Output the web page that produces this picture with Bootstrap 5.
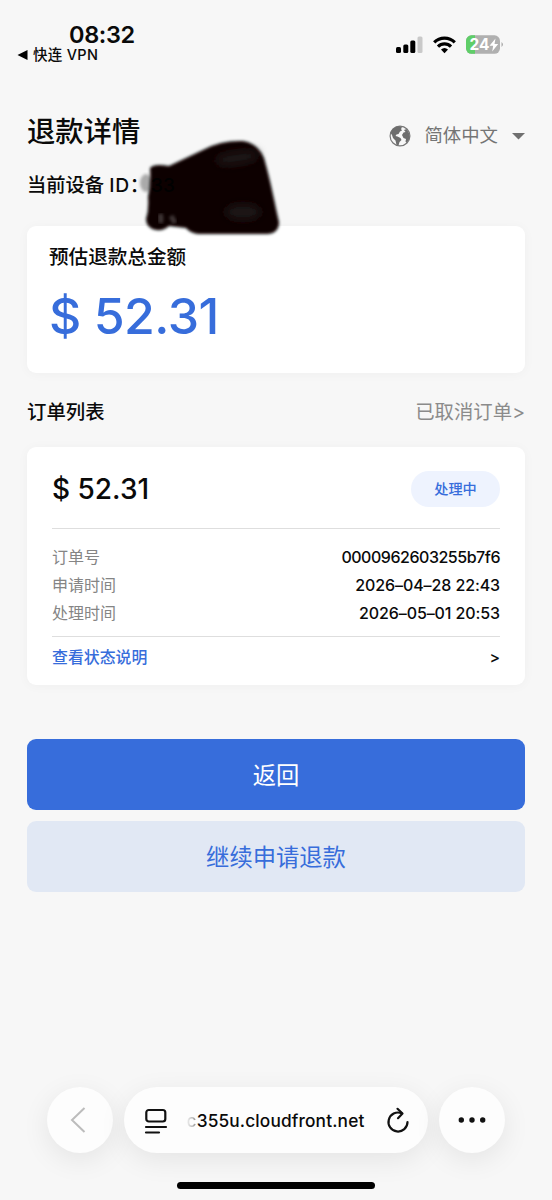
<!DOCTYPE html>
<html lang="zh-CN">
<head>
<meta charset="utf-8">
<meta name="viewport" content="width=device-width, initial-scale=1">
<title>退款详情</title>
<link href="https://cdn.jsdelivr.net/npm/bootstrap@5.3.0/dist/css/bootstrap.min.css" rel="stylesheet">
<style>
  :root { --brand: #376ddb; }
  body { font-family: Inter, "Noto Sans CJK SC", sans-serif; background: #f7f7f7; color: #0a0a0a; height: 1200px; overflow: hidden; }
  svg { display: block; flex: none; }
  .status-bar { height: 104px; padding: 21px 49px 0 17px; }
  .clock { font-size: 23.5px; line-height: 27px; font-weight: 600; padding-left: 52px; letter-spacing: -.35px; }
  .back-app { font-size: 14.5px; line-height: 14px; font-weight: 500; gap: 4px; letter-spacing: .3px; }
  .status-icons { padding-top: 14px; }
  .page-body { padding: 0 27px; }
  .page-title { font-size: 28.3px; line-height: 56px; height: 54px; font-weight: 500; margin: 0; }
  .lang { font-size: 18.4px; color: #757575; height: 54px; padding-top: 10px; }
  .lang span { margin: 0 14px 0 13px; }
  .device { font-size: 19.3px; line-height: 55px; height: 68px; font-weight: 500; position: relative; }
  .device .latin { letter-spacing: .7px; }
  .scribble { position: absolute; left: 106px; top: -23px; }
  .panel { background: #fff; border-radius: 9px; box-shadow: 0 1px 12px rgba(0,0,0,.035); }
  .summary { height: 147px; padding: 14px 22px; }
  .summary-label { font-size: 19.6px; line-height: 35px; height: 34px; font-weight: 500; }
  .total { font-size: 50px; line-height: 60px; font-weight: 500; color: var(--brand); padding-top: 12px; letter-spacing: -.5px; }
  .list-head { height: 74px; font-size: 19.4px; padding-top: 5px; }
  .list-head b { font-weight: 500; }
  .list-head span { color: #8b8b8b; }
  .order { height: 238px; padding: 0 25px; }
  .order-top { height: 82px; padding-top: 2px; border-bottom: 1px solid #dedede; }
  .order-amount { font-size: 28px; font-weight: 500; }
  .state { width: 89px; height: 36px; line-height: 35px; font-size: 14.2px; font-weight: 500; background: #eef3fe; color: var(--brand); }
  .order-rows { height: 108px; padding-top: 15px; border-bottom: 1px solid #dedede; }
  .order-rows > div { font-size: 16px; line-height: 27.8px; }
  .order-rows .key { color: #858585; }
  .order-rows .val { font-weight: 500; letter-spacing: -.1px; }
  .order-rows .serial { letter-spacing: -.47px; }
  .order-more { height: 42px; font-size: 15.9px; font-weight: 500; }
  .order-more a { color: var(--brand); text-decoration: none; }
  .actions { padding-top: 54px; gap: 11px; }
  .actions .btn { height: 71px; border-radius: 9px; border: 0; font-size: 23.3px; padding-top: 9px; }
  .btn-main { background: var(--brand); color: #fff; }
  .btn-soft { background: #e1e8f4; color: var(--brand); }
  .browser-bar { padding: 0 47px; gap: 11px; margin-top: 195px; }
  .bubble { height: 66px; background: #fdfdfd; border-radius: 33px; box-shadow: 0 7px 28px rgba(0,0,0,.08); }
  .bubble.round { width: 66px; flex: none; }
  .address { font-size: 17.3px; font-weight: 500; padding: 2px 18px 0 20px; }
  .address .url { letter-spacing: .15px; margin-left: -3px; }
  .address .faded { background: linear-gradient(90deg, #f2f2f2, #888); -webkit-background-clip: text; background-clip: text; color: transparent; }
  .home-bar { width: 198px; height: 7px; border-radius: 4px; background: #000; margin: 29px auto 0; }
</style>
<script src="https://cdn.jsdelivr.net/npm/bootstrap@5.3.0/dist/js/bootstrap.bundle.min.js"></script>
</head>
<body>
<header class="status-bar d-flex justify-content-between align-items-start">
  <div>
    <div class="clock">08:32</div>
    <div class="back-app d-flex align-items-center">
      <svg width="12" height="12" viewBox="0 0 12 12"><path d="M.5 6 10.500 1v10z"/></svg><span>快连 VPN</span>
    </div>
  </div>
  <div class="status-icons d-flex">
    <svg width="108" height="20" viewBox="395 35 108 20">
      <rect x="396" y="47" width="5" height="6" rx="1.500"/><rect x="403.300" y="44.500" width="5" height="8.500" rx="1.500"/>
      <rect x="410.300" y="40.500" width="5" height="12.500" rx="1.500"/><rect x="417.500" y="36.500" width="5" height="16.500" rx="1.500" fill="#c9c9c9"/>
      <g fill="none" stroke="#000" stroke-width="3.200"><path d="M434.200 42.300a14.700 14.700 0 0 1 20.600 0"/><path d="M438 46.600a9.200 9.200 0 0 1 13 0"/></g>
      <path d="M444.500 53.200l-3.500-3.600a5.200 5.200 0 0 1 7 0z"/>
      <clipPath id="cell"><rect x="466" y="35.300" width="34" height="18.500" rx="5.500"/></clipPath>
      <g clip-path="url(#cell)"><path fill="#b0b0b0" d="M466 35h35v20h-35z"/><path fill="#5fce68" d="M466 35h9v20h-9z"/></g>
      <path d="M501.500 42q3 2.500 0 5z" fill="#aaa"/>
      <text x="469.500" y="50.400" font-size="16" font-weight="700" fill="#fff" textLength="20" lengthAdjust="spacingAndGlyphs">24</text>
      <path d="M495.500 38.500l-6 7.300h3.700l-1 5.700 6-7.500h-3.700z" fill="#fff"/>
    </svg>
  </div>
</header>

<main class="page-body">
  <div class="d-flex justify-content-between">
    <h1 class="page-title">退款详情</h1>
    <div class="lang d-flex align-items-center">
      <svg width="22" height="22" viewBox="0 0 22 22"><circle cx="11" cy="11" r="9.900" fill="none" stroke="#777" stroke-width="1.200"/>
        <path fill="#6d6d6d" d="M1.500 8C3 4 6 1.500 11 1.300L13 2.500l-1 1.500 1 1.500-2 1-1.500 2.500-2 .5-1 1.500 2 .5 3 1.500 1 2-2 2-1 3.500-2-.5-1-4.500-2.500-2.500L3 10z"/>
        <path fill="#6d6d6d" d="M15 5l2.500-1L20 8l.8 3.500-1 3.500-2.300 3-1-1.500.5-2.500-2.500-1-1.500-3 1.500-2.500 2-.5z"/></svg>
      <span>简体中文</span>
      <svg width="13" height="7" viewBox="0 0 13 7" fill="#707070"><path d="M0 0h13L6.500 6.500z"/></svg>
    </div>
  </div>
  <div class="device">当前设备 <span class="latin">ID</span>：
    <svg class="scribble" width="160" height="110" viewBox="133 135 160 110">
      <defs><filter id="soft" x="-10%" y="-10%" width="120%" height="120%"><feGaussianBlur stdDeviation="1.500"/></filter>
      <filter id="haze" x="-60%" y="-80%" width="220%" height="260%"><feGaussianBlur stdDeviation="4"/></filter></defs>
      <ellipse cx="146" cy="183" rx="6" ry="9" fill="#aaa" filter="url(#soft)"/>
      <path filter="url(#soft)" fill="#090204" d="M150 168Q154 163 169 166L205 149Q222 140 243 141Q257 143 264 158C271 182 275 205 279 222Q279 233 268 234L198 234Q190 233 186 228L169 226Q164 231 156 230Q146 228 146 219Q149 210 148 197Q151 184 150 168z"/>
      <ellipse cx="237" cy="158" rx="22" ry="7" fill="#1d1415" filter="url(#haze)" transform="rotate(-8 237 158)"/>
      <ellipse cx="243" cy="212" rx="18" ry="8" fill="#1f1617" filter="url(#haze)"/>
      <path d="M160 214q2 5 0 9M171 216l4 7" fill="none" stroke="#706a6b" stroke-width="5" filter="url(#soft)" opacity=".5"/>
      <path d="M151 175v18" stroke="#5e5a5b" stroke-width="5" filter="url(#soft)" opacity=".6"/>
      <text x="151" y="192" font-size="19" font-weight="500" fill="#000">33</text>
    </svg>
  </div>

  <section class="panel summary">
    <div class="summary-label">预估退款总金额</div>
    <div class="total">$ 52.31</div>
  </section>

  <div class="list-head d-flex justify-content-between align-items-center"><b>订单列表</b><span>已取消订单&gt;</span></div>

  <section class="panel order">
    <div class="order-top d-flex justify-content-between align-items-center">
      <div class="order-amount">$ 52.31</div><div class="state rounded-pill text-center">处理中</div>
    </div>
    <div class="order-rows">
      <div class="d-flex justify-content-between"><span class="key">订单号</span><span class="val serial">0000962603255b7f6</span></div>
      <div class="d-flex justify-content-between"><span class="key">申请时间</span><span class="val">2026–04–28 22:43</span></div>
      <div class="d-flex justify-content-between"><span class="key">处理时间</span><span class="val">2026–05–01 20:53</span></div>
    </div>
    <div class="order-more d-flex justify-content-between align-items-center"><a href="#">查看状态说明</a><span>&gt;</span></div>
  </section>

  <div class="actions d-grid">
    <button class="btn btn-main" type="button">返回</button>
    <button class="btn btn-soft" type="button">继续申请退款</button>
  </div>
</main>

<footer>
  <div class="browser-bar d-flex">
    <div class="bubble round d-flex align-items-center justify-content-center pe-1">
      <svg width="18" height="28" viewBox="0 0 18 28" fill="none" stroke="#bcbcbc" stroke-width="2"><path d="M15.500 2 3 14l12.500 12"/></svg>
    </div>
    <div class="bubble address flex-grow-1 d-flex align-items-center justify-content-between">
      <svg width="24" height="28" viewBox="0 0 24 28" fill="none" stroke="#111" stroke-width="2.200" stroke-linecap="round"><rect x="2.300" y="3" width="19" height="11.500" rx="2.500"/><path d="M2 20h20M2 25.500h13"/></svg>
      <span class="url"><span class="faded">c</span>355u.cloudfront.net</span>
      <svg width="24" height="28" viewBox="0 0 24 28" fill="none" stroke="#111" stroke-width="2.200" stroke-linecap="round" stroke-linejoin="round"><path d="M15.500 6.200A9.500 9.500 0 1 0 21.500 15"/><path d="M11.500 1.800 16.500 6.500l-4.500 4.700"/></svg>
    </div>
    <div class="bubble round d-flex align-items-center justify-content-center">
      <svg width="28" height="6" viewBox="0 0 28 6" fill="#111"><circle cx="3.300" cy="3" r="2.700"/><circle cx="14" cy="3" r="2.700"/><circle cx="24.700" cy="3" r="2.700"/></svg>
    </div>
  </div>
  <div class="home-bar"></div>
</footer>
</body>
</html>
